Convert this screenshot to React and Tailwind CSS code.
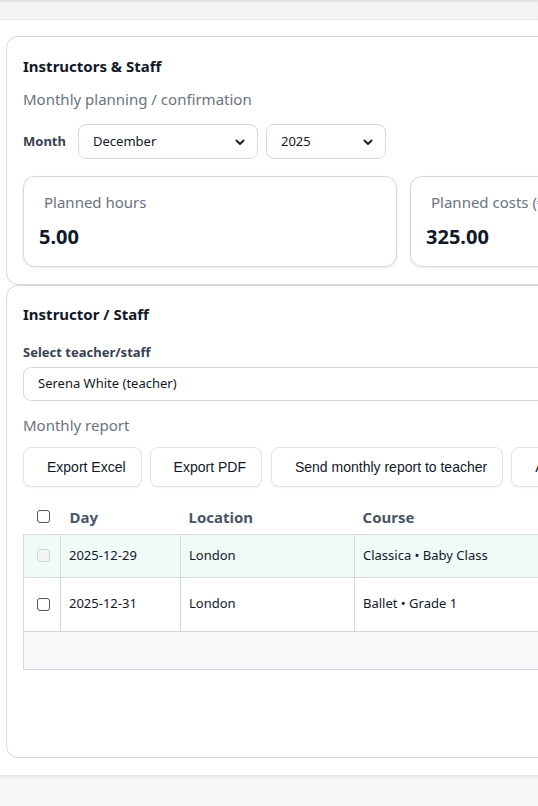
import React from 'react'

function Chevron() {
  return (
    <svg width="12" height="12" viewBox="0 0 12 12" className="pointer-events-none absolute right-[12px] top-1/2 -translate-y-1/2">
      <path d="M2.5 4.5 L6 8 L9.5 4.5" fill="none" stroke="#222" strokeWidth="2" strokeLinecap="round" strokeLinejoin="round" />
    </svg>
  )
}

function Select({ value, className }) {
  return (
    <div className={`relative ${className}`}>
      <div className="h-[35px] rounded-lg border border-[#d4d9df] bg-white pl-[14px] flex items-center text-[13px] text-[#111827]">
        {value}
      </div>
      <Chevron />
    </div>
  )
}

function Stat({ label, value }) {
  return (
    <div className="w-[374px] h-[91px] shrink-0 rounded-xl border border-[#d4d9df] bg-white shadow-[0_1px_3px_rgba(0,0,0,0.08)] pl-[15px] pt-[15px]">
      <div className="pl-[5px] text-[15px] text-[#6b7280] leading-5">{label}</div>
      <div className="mt-[13px] text-[20px] font-bold text-[#111827] leading-6">{value}</div>
    </div>
  )
}

function Box({ disabled }) {
  return (
    <span className={`block w-[13px] h-[13px] rounded-[3px] border ${disabled ? 'border-[#d1d5db] bg-[#f3f4f6]' : 'border-[#4b5563] bg-white'}`} />
  )
}

function Btn({ children, className = '' }) {
  return (
    <button className={`h-[40px] shrink-0 whitespace-nowrap pl-[23px] pr-[15px] rounded-lg border border-[#dfe3e8] bg-white shadow-[0_1px_2px_rgba(0,0,0,0.04)] ${className}`}>
      {children}
    </button>
  )
}

const rows = [
  { day: '2025-12-29', loc: 'London', course: 'Classica • Baby Class', done: true },
  { day: '2025-12-31', loc: 'London', course: 'Ballet • Grade 1', done: false },
]

export default function App() {
  return (
    <div className="w-[538px] h-[806px] overflow-hidden bg-[#f6f7f9] font-['Noto_Sans',sans-serif]">
      <div className="h-[20px] bg-[#f4f5f7] border-b border-[#e2e5e9] shadow-[inset_0_3px_3px_-2px_rgba(0,0,0,0.12)]" />
      <div className="w-[760px] bg-white pt-[16px] pl-[6px] pb-[17px] shadow-[0_2px_4px_rgba(0,0,0,0.06)] border-b border-[#e2e5e9]">
        <section className="rounded-xl border border-[#d4d9df] pt-[19px] px-[16px] pb-[17px]">
          <h2 className="text-[15px] font-bold text-[#111827] leading-5">Instructors &amp; Staff</h2>
          <p className="mt-[13px] text-[15px] text-[#6b7280] leading-5">Monthly planning / confirmation</p>
          <div className="mt-[15px] flex items-center">
            <span className="text-[13px] font-bold text-[#374151] w-[55px]">Month</span>
            <Select value="December" className="w-[180px]" />
            <Select value="2025" className="w-[120px] ml-[8px]" />
          </div>
          <div className="mt-[17px] flex gap-[13px]">
            <Stat label="Planned hours" value="5.00" />
            <Stat label="Planned costs (€)" value="325.00" />
          </div>
        </section>
        <section className="h-[473px] rounded-xl border border-[#d4d9df] pt-[18px] px-[16px]">
          <h2 className="text-[15px] font-bold text-[#111827] leading-5">Instructor / Staff</h2>
          <div className="mt-[20px] text-[13px] font-bold text-[#374151] leading-4">Select teacher/staff</div>
          <div className="mt-[7px] h-[34px] rounded-lg border border-[#d4d9df] pl-[14px] flex items-center text-[13px] text-[#111827]">
            Serena White (teacher)
          </div>
          <p className="mt-[14px] text-[15px] text-[#6b7280] leading-5">Monthly report</p>
          <div className="mt-[12px] flex gap-[8px] font-['Liberation_Sans',Arial,sans-serif] text-[14px] text-[#111827]">
            <Btn>Export Excel</Btn>
            <Btn>Export PDF</Btn>
            <Btn className="ml-[1px]">Send monthly report to teacher</Btn>
            <Btn>Approve month</Btn>
          </div>
          <table className="mt-[13px] w-[720px] border-collapse text-[13px] text-[#111827]">
            <thead>
              <tr className="h-[34px] text-left text-[15px] font-bold text-[#4b5563]">
                <th className="w-[37px] pl-[13px]"><Box /></th>
                <th className="w-[120px] pl-[9px] font-bold">Day</th>
                <th className="w-[174px] pl-[8px] font-bold">Location</th>
                <th className="pl-[8px] font-bold">Course</th>
              </tr>
            </thead>
            <tbody>
              {rows.map((r, i) => (
                <tr key={r.day} className={`${i === 0 ? 'h-[43px] bg-[#f0faf7]' : 'h-[54px] bg-white'} border border-[#d4d9df]`}>
                  <td className="pl-[13px] border-r border-[#d4d9df]"><Box disabled={r.done} /></td>
                  <td className="pl-[8px] border-r border-[#d4d9df]">{r.day}</td>
                  <td className="pl-[8px] border-r border-[#d4d9df]">{r.loc}</td>
                  <td className="pl-[8px]">{r.course}</td>
                </tr>
              ))}
              <tr className="h-[38px] bg-[#f7f8fa] border border-[#d4d9df]">
                <td colSpan={4} />
              </tr>
            </tbody>
          </table>
        </section>
      </div>
    </div>
  )
}
